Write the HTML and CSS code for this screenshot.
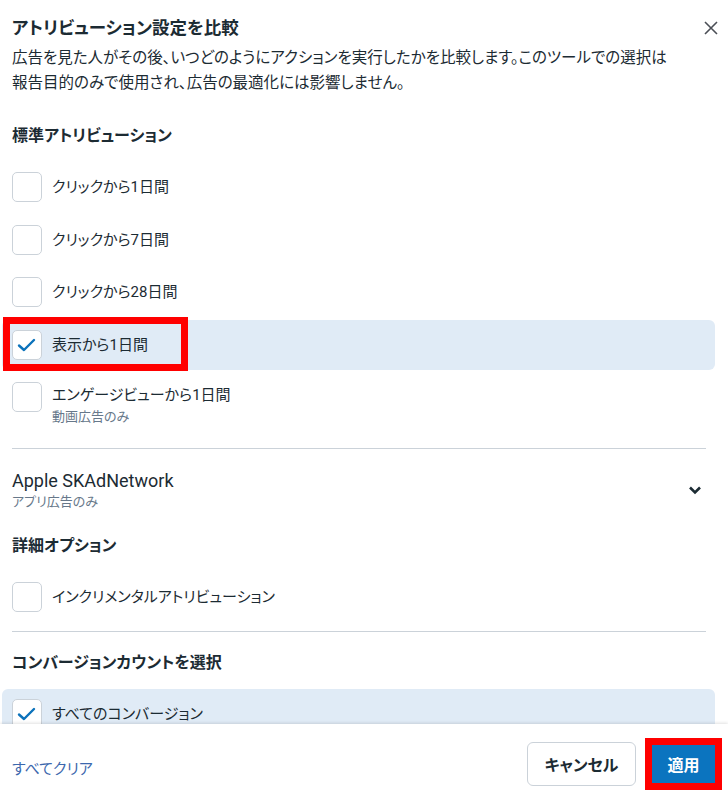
FILE: index.html
```html
<!DOCTYPE html>
<html lang="ja">
<head>
    <meta charset="UTF-8">
    <title>アトリビューション設定を比較</title>
    <link rel="stylesheet" href="styles.css">
</head>
<body>
    <div class="modal">
        <div class="modal-body">
            <div class="modal-header">
                <h1>アトリビューション設定を比較</h1>
                <button class="close-btn" aria-label="閉じる">
                    <svg width="16" height="16" viewBox="0 0 16 16"><path d="M2 2 L14 14 M14 2 L2 14" stroke="#4b4f56" stroke-width="1.6" fill="none"/></svg>
                </button>
            </div>
            <p class="desc">広告を見た人がその後、いつどのようにアクションを実行したかを比較します。このツールでの選択は<br>報告目的のみで使用され、広告の最適化には影響しません。</p>

            <h2 class="section-title first">標準アトリビューション</h2>
            <div class="option-list">
                <div class="option">
                    <span class="checkbox"></span>
                    <span class="label">クリックから1日間</span>
                </div>
                <div class="option">
                    <span class="checkbox"></span>
                    <span class="label">クリックから7日間</span>
                </div>
                <div class="option">
                    <span class="checkbox"></span>
                    <span class="label">クリックから28日間</span>
                </div>
                <div class="option selected">
                    <span class="checkbox checked">
                        <svg width="20" height="16" viewBox="0 0 20 16"><path d="M2 8.5 L7 13 L17 3" stroke="#0b72bb" stroke-width="2.4" fill="none" stroke-linecap="round" stroke-linejoin="round"/></svg>
                    </span>
                    <span class="label">表示から1日間</span>
                    <span class="highlight-box"></span>
                </div>
                <div class="option two-line">
                    <span class="checkbox"></span>
                    <span class="label-group">
                        <span class="label">エンゲージビューから1日間</span>
                        <span class="sub">動画広告のみ</span>
                    </span>
                </div>
            </div>

            <hr class="divider after-list">

            <div class="expander">
                <div>
                    <div class="expander-title">Apple SKAdNetwork</div>
                    <div class="sub">アプリ広告のみ</div>
                </div>
                <svg class="chevron" width="14" height="10" viewBox="0 0 14 10"><path d="M2 2.5 L7 7.5 L12 2.5" stroke="#1c2b33" stroke-width="2.6" fill="none"/></svg>
            </div>

            <h2 class="section-title detail">詳細オプション</h2>
            <div class="option-list">
                <div class="option">
                    <span class="checkbox"></span>
                    <span class="label">インクリメンタルアトリビューション</span>
                </div>
            </div>

            <hr class="divider after-detail">

            <h2 class="section-title count">コンバージョンカウントを選択</h2>
            <div class="option-list">
                <div class="option selected">
                    <span class="checkbox checked">
                        <svg width="20" height="16" viewBox="0 0 20 16"><path d="M2 8.5 L7 13 L17 3" stroke="#0b72bb" stroke-width="2.4" fill="none" stroke-linecap="round" stroke-linejoin="round"/></svg>
                    </span>
                    <span class="label">すべてのコンバージョン</span>
                </div>
            </div>
        </div>

        <div class="modal-footer">
            <a href="#" class="clear-link">すべてクリア</a>
            <div class="footer-buttons">
                <button class="btn btn-cancel">キャンセル</button>
                <button class="btn btn-apply">適用</button>
            </div>
        </div>
    </div>
</body>
</html>
```

FILE: styles.css
```css
body {
    margin: 0;
    font-family: Roboto, "Noto Sans CJK JP", sans-serif;
    font-feature-settings: "palt";
    color: #1c2b33;
    background-color: #fff;
}

.modal {
    width: 728px;
    height: 803px;
    display: flex;
    flex-direction: column;
    overflow: hidden;
}

.modal-body {
    flex: 1;
    overflow: hidden;
    padding: 14px 22px 0 12px;
}

.modal-header {
    display: flex;
    justify-content: space-between;
    align-items: center;
}

h1 {
    margin: 0;
    font-size: 17.5px;
    line-height: 28px;
    font-weight: bold;
}

.close-btn {
    border: none;
    background: none;
    padding: 0;
    margin-right: -13px;
    width: 16px;
    height: 16px;
    display: flex;
    cursor: pointer;
}

.desc {
    margin: 4px 0 0;
    font-size: 15.5px;
    line-height: 25px;
    color: #1c2b33;
}

.section-title {
    margin: 0;
    font-size: 16px;
    line-height: 24px;
    font-weight: bold;
}

.section-title.first {
    margin-top: 28px;
}

.section-title.detail {
    margin-top: 23px;
}

.section-title.count {
    margin-top: 19px;
}

.option-list {
    margin-top: 14px;
    display: flex;
    flex-direction: column;
    gap: 2.5px;
}

.option {
    position: relative;
    display: flex;
    align-items: center;
    gap: 10px;
    padding: 10px;
    margin: 0 -9px 0 -10px;
    border-radius: 6px;
}

.option.selected {
    background-color: #e0ebf6;
}

.option.two-line {
    align-items: flex-start;
}

.checkbox {
    flex: none;
    width: 28px;
    height: 28px;
    border: 1px solid #cbd2d9;
    border-radius: 5px;
    background-color: #fff;
    display: flex;
    align-items: center;
    justify-content: center;
}

.label {
    font-size: 15px;
    line-height: 26px;
}

.label-group {
    display: flex;
    flex-direction: column;
}

.sub {
    font-size: 13px;
    line-height: 17px;
    color: #67788a;
}

/* red annotation frame */
.highlight-box {
    position: absolute;
    left: 1px;
    top: -3px;
    width: 171px;
    height: 40px;
    border: 7px solid #ff0000;
}

.divider {
    border: none;
    border-top: 1px solid #cbd2d9;
    margin: 0;
}

.divider.after-list {
    margin-top: 13px;
}

.divider.after-detail {
    margin-top: 9px;
}

.expander {
    margin-top: 20px;
    display: flex;
    justify-content: space-between;
    align-items: center;
}

.expander-title {
    font-size: 18px;
    line-height: 24px;
}

.expander .sub {
    line-height: 18px;
}

.chevron {
    margin-right: 4px;
}

.modal-footer {
    height: 79px;
    flex: none;
    display: flex;
    justify-content: space-between;
    align-items: center;
    padding: 0 13px 0 12px;
    background-color: #fff;
    box-shadow: 0 -1px 3px rgba(0, 0, 0, 0.12);
    position: relative;
}

.clear-link {
    color: #3c67ad;
    text-decoration: none;
    font-size: 15px;
    padding-top: 7px;
}

.footer-buttons {
    display: flex;
    align-items: center;
    gap: 16px;
}

.btn {
    font-family: Roboto, "Noto Sans CJK JP", sans-serif;
    font-feature-settings: "palt";
    font-size: 16px;
    font-weight: bold;
    cursor: pointer;
}

.btn-cancel {
    width: 109px;
    height: 44px;
    border: 1px solid #cbd2d9;
    border-radius: 6px;
    background-color: #fff;
    color: #1c2b33;
}

.btn-apply {
    width: 63px;
    height: 38px;
    border: none;
    background-color: #0b74bf;
    color: #fff;
    outline: 7px solid #ff0000;
}
```
